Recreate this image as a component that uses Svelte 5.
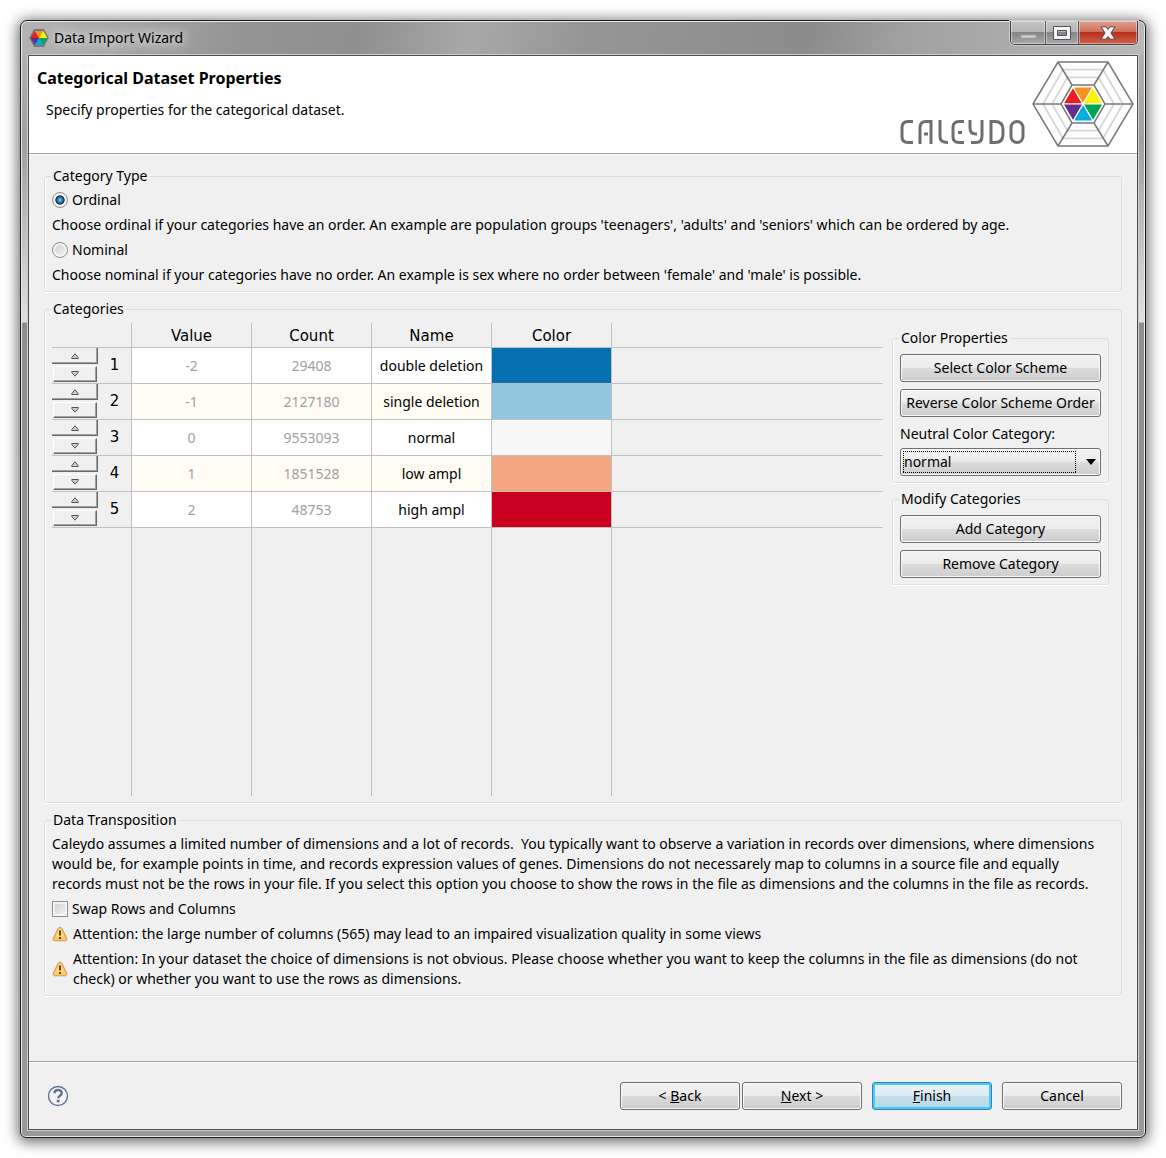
<script>
  const rows = [
    { value: '-2', count: '29408', name: 'double deletion', color: '#0571b0' },
    { value: '-1', count: '2127180', name: 'single deletion', color: '#92c5de' },
    { value: '0', count: '9553093', name: 'normal', color: '#f7f7f7' },
    { value: '1', count: '1851528', name: 'low ampl', color: '#f4a582' },
    { value: '2', count: '48753', name: 'high ampl', color: '#ca0020' }
  ];
  const warnings = [
    'Attention: the large number of columns (565) may lead to an impaired visualization quality in some views',
    'Attention: In your dataset the choice of dimensions is not obvious. Please choose whether you want to keep the columns in the file as dimensions (do not check) or whether you want to use the rows as dimensions.'
  ];
  // Wedges of the colour wheel around its centre.
  const wedges = [
    { points: '0,0 -20,0 -10,-17', fill: '#ed1c24' },
    { points: '0,0 -10,-17 10,-17', fill: '#f7941d' },
    { points: '0,0 10,-17 20,0', fill: '#fff200' },
    { points: '0,0 20,0 10,17', fill: '#00a651' },
    { points: '0,0 10,17 -10,17', fill: '#00aee0' },
    { points: '0,0 -10,17 -20,0', fill: '#662d91' }
  ];
  const rings = [31, 40];
  let type = $state('ordinal');
  let swap = $state(false);
  let neutral = $state('normal');
</script>

<div class="desktop">
  <div class="window">
    <header class="titlebar">
      <svg class="appicon" width="20" height="20" viewBox="-24 -24 48 48" aria-hidden="true">
        <polygon points="-22,0 -11,-20 11,-20 22,0 11,20 -11,20" fill="#777" stroke="#777" stroke-width="3" />
        {#each wedges as w}<polygon points={w.points} fill={w.fill} />{/each}
      </svg>
      <span class="title">Data Import Wizard</span>
      <div class="winbuttons">
        <button class="min" aria-label="Minimize"><svg width="17" height="5" viewBox="0 0 17 5"><rect x="1" y="1" width="15" height="3" fill="#d4d4d4" stroke="#a0a0a2" stroke-width="1" /></svg></button>
        <button class="max" aria-label="Maximize"><svg width="18" height="14" viewBox="0 0 18 14"><path d="M.5.5h17v13H.5zM4.500 4.500v5h9v-5z" fill="#f4f4f4" fill-rule="evenodd" stroke="#50525e" /></svg></button>
        <button class="close" aria-label="Close"><svg width="16" height="14" viewBox="0 0 16 14"><path d="M1 .8h4.800L8 3.400 10.200.8H15L11 7 15 13.200h-4.800L8 10.600 5.800 13.200H1L5 7z" fill="#f6f6f6" stroke="#574450" /></svg></button>
      </div>
    </header>

    <main class="content">
      <section class="banner">
        <div class="headings">
          <h1>Categorical Dataset Properties</h1>
          <p>Specify properties for the categorical dataset.</p>
        </div>
        <svg class="logo" width="236" height="90" viewBox="0 0 236 90" role="img" aria-label="Caleydo">
          <g fill="none" stroke="#6d6e70" stroke-width="3">
            <path d="M14 63.500H9q-6 0-6 6v9q0 6 6 6h5" />
            <path d="M21 86V69.500q0-6 6-6h5V86M25 76h4" />
            <path d="M41 62v17q0 5.500 8 5.500" />
            <path d="M65 63.500h-5q-6 0-6 6v9q0 6 6 6h5M59 74.500h4" />
            <path d="M71 62v8q0 6 6 6h1M83 62v16q0 6.500-6 6.500h-5" />
            <path d="M92 63.500h4q8 0 8 8v5q0 8-8 8h-4z" />
            <rect x="112" y="63.500" width="12" height="21" rx="6" />
          </g>
          <g transform="translate(184 46)">
            <g fill="none" stroke="#d6d6d7" stroke-width="1.800">
              {#each rings as r}
                <polygon points="{-r},0 {-r / 2},{-r * 0.86} {r / 2},{-r * 0.86} {r},0 {r / 2},{r * 0.86} {-r / 2},{r * 0.86}" />
              {/each}
            </g>
            <g fill="none" stroke="#77787a" stroke-width="1.500">
              <polygon points="-50,0 -25,-42 25,-42 50,0 25,42 -25,42" />
              <polygon points="-22,0 -11,-19 11,-19 22,0 11,19 -11,19" fill="#fff" />
              <path d="M-50 0h28M22 0h28M-25-42l14 23M25-42L11-19M-25 42l14-23M25 42L11 19" />
            </g>
            <g stroke="#fff" stroke-width="1.200">
              {#each wedges as w}<polygon points={w.points} fill={w.fill} />{/each}
            </g>
          </g>
        </svg>
      </section>

      <form class="body" onsubmit={(e) => e.preventDefault()}>
        <fieldset class="group stack">
          <legend>Category Type</legend>
          <label class="check"><input type="radio" value="ordinal" bind:group={type} />Ordinal</label>
          <p>Choose ordinal if your categories have an order. An example are population groups 'teenagers', 'adults' and 'seniors' which can be ordered by age.</p>
          <label class="check"><input type="radio" value="nominal" bind:group={type} />Nominal</label>
          <p>Choose nominal if your categories have no order. An example is sex where no order between 'female' and 'male' is possible.</p>
        </fieldset>

        <fieldset class="group">
          <legend>Categories</legend>
          <div class="categories">
            <table>
              <thead>
                <tr>
                  <td class="rowhead"></td>
                  <th class="col">Value</th>
                  <th class="col">Count</th>
                  <th class="col">Name</th>
                  <th class="col">Color</th>
                  <td class="rest"></td>
                </tr>
              </thead>
              <tbody>
                {#each rows as row, i}
                  <tr class="data">
                    <th class="rowhead" scope="row">
                      <div class="order">
                        <div class="spin">
                          <button type="button" class="up" aria-label="Move {row.name} up"><svg width="8" height="6" viewBox="0 0 8 6"><path d="M4 .8 7.200 4.500v1H.8v-1z" fill="#ccc" stroke="#555" /></svg></button>
                          <button type="button" class="down" aria-label="Move {row.name} down"><svg width="8" height="6" viewBox="0 0 8 6"><path d="M4 5.200 7.200 1.500v-1H.8v1z" fill="#ccc" stroke="#555" /></svg></button>
                        </div>
                        <span class="num">{i + 1}</span>
                      </div>
                    </th>
                    <td class="cell dim">{row.value}</td>
                    <td class="cell dim">{row.count}</td>
                    <td class="cell">{row.name}</td>
                    <td class="swatch" style="background-color: {row.color}"></td>
                    <td class="rest"></td>
                  </tr>
                {/each}
                <tr class="empty"><td></td><td></td><td></td><td></td><td></td><td class="rest"></td></tr>
              </tbody>
            </table>

            <div class="side">
              <fieldset class="group tools">
                <legend>Color Properties</legend>
                <button type="button" class="btn">Select Color Scheme</button>
                <button type="button" class="btn">Reverse Color Scheme Order</button>
                <div class="field">
                  <label for="neutral">Neutral Color Category:</label>
                  <div class="combo">
                    <select id="neutral" bind:value={neutral}>
                      {#each rows as row}<option>{row.name}</option>{/each}
                    </select>
                    <svg width="10" height="6" viewBox="0 0 10 6" aria-hidden="true"><path d="M0 0h10L5 6z" /></svg>
                  </div>
                </div>
              </fieldset>
              <fieldset class="group tools">
                <legend>Modify Categories</legend>
                <button type="button" class="btn">Add Category</button>
                <button type="button" class="btn">Remove Category</button>
              </fieldset>
            </div>
          </div>
        </fieldset>

        <fieldset class="group stack">
          <legend>Data Transposition</legend>
          <p>Caleydo assumes a limited number of dimensions and a lot of records.&nbsp; You typically want to observe a variation in records over dimensions, where dimensions would be, for example points in time, and records expression values of genes. Dimensions do not necessarely map to columns in a source file and equally records must not be the rows in your file. If you select this option you choose to show the rows in the file as dimensions and the columns in the file as records.</p>
          <label class="check"><input type="checkbox" bind:checked={swap} />Swap Rows and Columns</label>
          {#each warnings as text}
            <div class="warning">
              <svg width="16" height="16" viewBox="0 0 16 16" aria-hidden="true">
                <path d="M8 1.200c1 0 1.600.6 2 1.400l4.600 9.400c.7 1.600.2 2.800-1.400 2.800H2.800c-1.600 0-2.100-1.200-1.400-2.800L6 2.600c.4-.8 1-1.400 2-1.400z" fill="#fdc765" stroke="#c9975a" />
                <path d="M8 2.500 4 11h8z" fill="#ffe6ae" opacity=".6" />
                <path d="M8 4.500v5M8 11v2" stroke="#6b4310" stroke-width="2" />
              </svg>
              <p>{text}</p>
            </div>
          {/each}
        </fieldset>
      </form>

      <footer class="footer">
        <button class="help" aria-label="Help">
          <svg width="22" height="22" viewBox="0 0 22 22">
            <circle cx="11" cy="11" r="9.500" fill="#f4f5f7" stroke="#5f7390" stroke-width="1.400" />
            <path d="M7.500 8.300C7.500 4 14.800 4 14.800 8c0 2.800-3.600 2.600-3.600 5.300" fill="none" stroke="#5f7390" stroke-width="2.400" />
            <rect x="9.800" y="14.800" width="2.800" height="2.600" fill="#5f7390" />
          </svg>
        </button>
        <div class="nav">
          <button class="btn">&lt; <u>B</u>ack</button>
          <button class="btn"><u>N</u>ext &gt;</button>
        </div>
        <button class="btn primary"><u>F</u>inish</button>
        <button class="btn">Cancel</button>
      </footer>
    </main>
  </div>
</div>

<style>
  :global(body) {
    background: #fff;
  }
  .desktop,
  .desktop * {
    box-sizing: border-box;
  }
  .desktop {
    display: flex;
    min-height: 100vh;
    padding: 20px;
    font-family: 'Noto Sans', 'Open Sans', sans-serif;
    font-size: 14px;
    line-height: 20px;
    color: #000;
  }
  h1,
  p {
    margin: 0;
  }
  button {
    font: inherit;
    color: inherit;
    padding: 0;
  }
  .window {
    flex: 1;
    display: flex;
    flex-direction: column;
    padding: 0 7px 7px;
    border: 1px solid #1c1c1c;
    border-radius: 7px 7px 6px 6px;
    background:
      linear-gradient(100deg, #b4b4b4 0, #949494 20%, #8f8f8f 30%, #a8a8a8 40%, #969696 50%, #8b8b8b 70%, #a0a0a0 78%, #b9b9b9 100%) top / 100% 34px no-repeat,
      linear-gradient(#b8b8b8 0, #a0a0a0 120px, #e0e0e0 301px, #8f8f8f 302px, #999 100%);
    box-shadow:
      inset 0 0 0 1px #e8e8e8,
      0 2px 14px 2px rgba(0, 0, 0, 0.6);
  }
  .titlebar {
    display: flex;
    align-items: center;
    gap: 5px;
    height: 34px;
    padding-left: 1px;
  }
  .title {
    flex: 1;
    text-shadow:
      0 0 8px #ddd,
      0 0 12px #ddd,
      0 0 16px #ddd;
  }
  .winbuttons {
    display: flex;
    align-self: flex-start;
    height: 24px;
    border: 1px solid #444;
    border-top: 0;
    border-radius: 0 0 5px 5px;
    box-shadow: 0 0 0 1px #ccc;
    overflow: hidden;
  }
  .winbuttons button {
    display: flex;
    align-items: center;
    justify-content: center;
    border: 0;
    border-right: 1px solid #555;
    background: linear-gradient(#c6c6c6 0, #b4b4b4 46%, #858585 50%, #a9a9ab 100%);
    box-shadow: inset 0 0 0 1px rgba(255, 255, 255, 0.4);
  }
  .winbuttons .min {
    width: 35px;
    padding-top: 8px;
  }
  .winbuttons .max {
    width: 33px;
  }
  .winbuttons .close {
    width: 58px;
    border-right: 0;
    background: linear-gradient(#dfa292 0, #cf6f5c 46%, #b7301b 50%, #d0604a 100%);
  }
  .content {
    flex: 1;
    display: flex;
    flex-direction: column;
    border: 1px solid #505050;
    background: #f0f0f0;
    box-shadow: 0 0 0 1px #ccc;
  }
  .banner {
    display: flex;
    justify-content: space-between;
    height: 98px;
    padding: 2px 2px 0 8px;
    background: #fff;
    border-bottom: 1px solid #a0a0a0;
  }
  .headings {
    display: flex;
    flex-direction: column;
    gap: 12px;
    padding-top: 10px;
  }
  h1 {
    font-size: 16px;
    line-height: 20px;
    font-weight: 700;
  }
  .headings p {
    padding-left: 9px;
  }
  .body {
    flex: 1;
    display: flex;
    flex-direction: column;
    gap: 7px;
    padding: 11px 15px 16px;
    border-top: 1px solid #fff;
  }
  .group {
    min-width: 0;
    margin: 0;
    padding: 4px 7px 6px;
    border: 1px solid #d5dfe5;
    border-radius: 3px;
    box-shadow:
      inset 1px 0 #fff,
      0 1px #fff;
  }
  legend {
    margin-left: -1px;
    padding: 0 2px;
  }
  .stack > * + :not(legend) {
    margin-bottom: 5px;
  }
  .stack > :last-child:last-child {
    margin-bottom: 0;
  }
  .stack p {
    padding-right: 16px;
  }
  .check {
    display: flex;
    align-items: center;
    gap: 4px;
  }
  input {
    appearance: none;
    width: 16px;
    height: 16px;
    margin: 0;
    border: 1px solid #8e8f8f;
    background: linear-gradient(135deg, #c8ccd2, #f6f6f6);
    box-shadow: inset 0 0 0 2px #f4f4f4;
  }
  input[type='radio'] {
    border-radius: 50%;
  }
  input[type='radio']:checked {
    background: radial-gradient(circle at 50% 50%, #8fd6ee 0, #2a7ba5 24%, #0d3350 42%, #f0f2f3 52%);
    box-shadow: none;
  }
  input[type='checkbox']:checked {
    background: #2a5a8a;
  }
  .categories {
    display: flex;
    align-items: flex-start;
    gap: 9px;
    padding-right: 5px;
  }
  table {
    flex: 1;
    width: 0;
    table-layout: fixed;
    border-collapse: separate;
    border-spacing: 0;
  }
  td,
  th {
    padding: 0;
    font-weight: 400;
    text-align: center;
    border-right: 1px solid #c0c0c0;
    border-bottom: 1px solid #c0c0c0;
  }
  .rowhead {
    width: 80px;
    vertical-align: top;
  }
  .col {
    width: 120px;
    height: 25px;
    padding-top: 2px;
  }
  .col,
  .num {
    font-family: 'DejaVu Sans', sans-serif;
    font-size: 15px;
  }
  .data {
    height: 36px;
  }
  .cell {
    background: #fff;
  }
  .data:nth-child(even) .cell {
    background: #fffdf3;
  }
  .dim {
    color: #a0a0a0;
  }
  .rest,
  .data .rowhead + .rest {
    border-right: 0;
  }
  .empty td {
    height: 268px;
    border-bottom: 0;
  }
  .order {
    display: flex;
    align-items: center;
  }
  .spin {
    display: flex;
    flex-direction: column;
    align-items: center;
    gap: 2px;
    width: 46px;
  }
  .spin button {
    display: flex;
    align-items: center;
    justify-content: center;
    width: 44px;
    height: 16px;
    border: 1px solid #fff;
    border-right-color: #696969;
    border-bottom-color: #696969;
    background: #f0f0f0;
    box-shadow: inset -1px -1px #a0a0a0;
  }
  .spin .up {
    width: 46px;
    border-top-width: 0;
    border-left-width: 0;
  }
  .num {
    flex: 1;
  }
  .side {
    display: flex;
    flex-direction: column;
    gap: 6px;
    width: 217px;
    padding-top: 5px;
  }
  .tools {
    padding: 6px 7px;
  }
  .tools .btn {
    width: 100%;
    margin-bottom: 7px;
  }
  .tools .btn:last-child {
    margin-bottom: 0;
  }
  .btn {
    display: block;
    height: 28px;
    border: 1px solid #707070;
    border-radius: 3px;
    background: linear-gradient(#f3f3f3 0, #ebebeb 48%, #dcdcdc 50%, #cdcdcd 100%);
    box-shadow: inset 0 0 0 1px #fafafa;
    white-space: nowrap;
  }
  .field {
    display: flex;
    flex-direction: column;
    gap: 4px;
  }
  .combo {
    display: grid;
    align-items: center;
  }
  .combo > * {
    grid-area: 1 / 1;
  }
  .combo svg {
    justify-self: end;
    margin-right: 5px;
    pointer-events: none;
  }
  select {
    appearance: none;
    width: 100%;
    height: 28px;
    padding: 0 24px 0 3px;
    border: 1px solid #707070;
    border-radius: 3px;
    background:
      repeating-linear-gradient(90deg, #000 0 1px, transparent 1px 2px) 2px 2px / calc(100% - 26px) 1px no-repeat,
      repeating-linear-gradient(90deg, #000 0 1px, transparent 1px 2px) 2px 23px / calc(100% - 26px) 1px no-repeat,
      repeating-linear-gradient(#000 0 1px, transparent 1px 2px) 2px 2px / 1px 22px no-repeat,
      repeating-linear-gradient(#000 0 1px, transparent 1px 2px) calc(100% - 24px) 2px / 1px 22px no-repeat,
      linear-gradient(#f3f3f3 0, #ebebeb 48%, #dcdcdc 50%, #cdcdcd 100%);
    box-shadow: inset 0 0 0 1px #fafafa;
    color: #000;
    font: inherit;
  }
  .warning {
    display: flex;
    align-items: center;
    gap: 5px;
  }
  .warning svg {
    flex: none;
  }
  .footer {
    display: flex;
    align-items: center;
    gap: 10px;
    padding: 20px 15px 19px;
    border-top: 1px solid #a0a0a0;
    box-shadow: inset 0 1px #fff;
  }
  .footer .btn {
    width: 120px;
  }
  .help {
    display: flex;
    margin: 0 auto 0 3px;
    border: 0;
    background: none;
  }
  .nav {
    display: flex;
    gap: 2px;
  }
  .primary {
    border-color: #3c7fb1;
    background: linear-gradient(#eaf3f8 0, #dcebf3 48%, #c8dfeb 50%, #b8d6e6 100%);
    box-shadow: inset 0 0 0 2px #3dd0fb;
  }
</style>
